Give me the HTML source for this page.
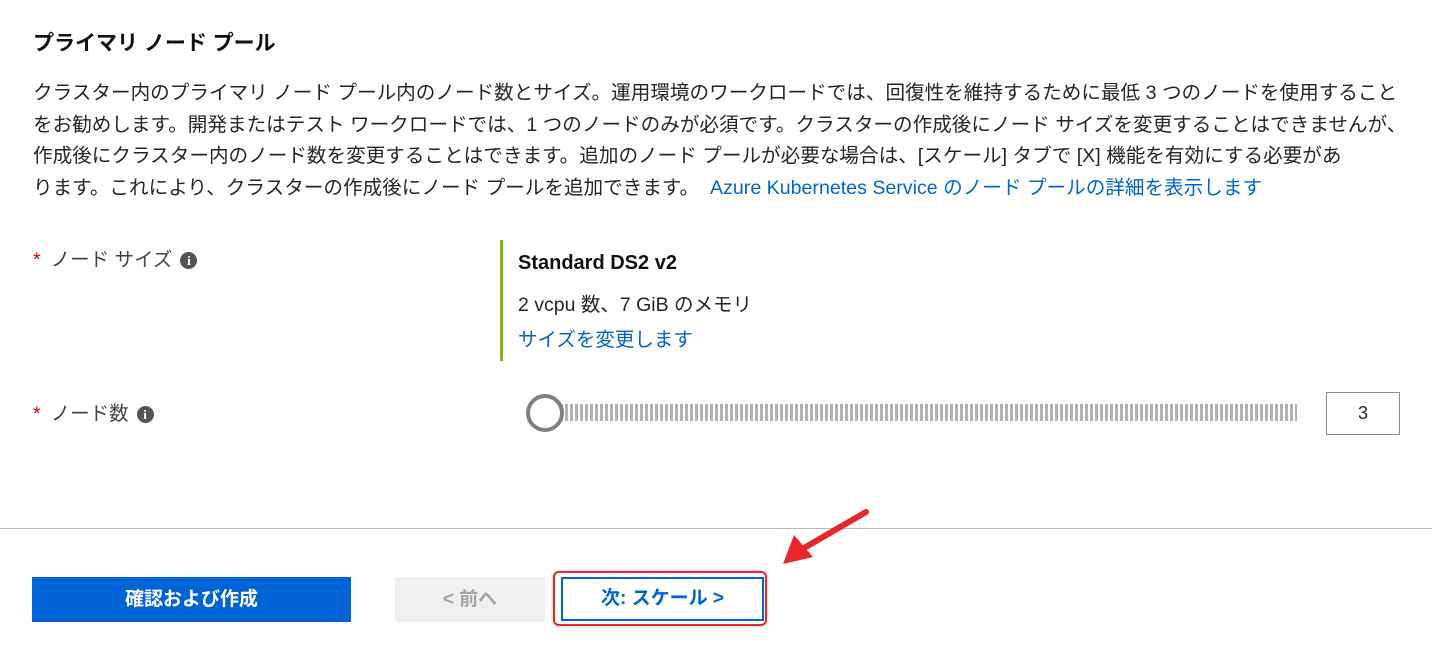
<!DOCTYPE html>
<html><head><meta charset="utf-8"><style>
body{margin:0;width:1432px;height:645px;background:#fff;position:relative;overflow:hidden;font-family:"Liberation Sans","Noto Sans CJK JP",sans-serif;color:#262626}
.a{position:absolute;white-space:nowrap}
.p{font-size:19.6px;line-height:31.5px}
a{color:#0066cc;text-decoration:none}
.info{display:inline-block;width:17px;height:17px;border-radius:50%;background:#555;color:#fff;font-size:13px;font-weight:bold;text-align:center;line-height:17px;font-family:"Liberation Serif",serif;vertical-align:middle;margin-left:8px}
.req{color:#e00;margin-right:10px}
</style></head><body>
<div class="a" style="left:33px;top:27px;font-size:21px;font-weight:bold;color:#111">プライマリ ノード プール</div>
<div class="a p" style="left:33px;top:78px">クラスター内のプライマリ ノード プール内のノード数とサイズ。運用環境のワークロードでは、回復性を維持するために最低 3 つのノードを使用すること<br>をお勧めします。開発またはテスト ワークロードでは、1 つのノードのみが必須です。クラスターの作成後にノード サイズを変更することはできませんが、<br>作成後にクラスター内のノード数を変更することはできます。追加のノード プールが必要な場合は、[スケール] タブで [X] 機能を有効にする必要があ<br>ります。これにより、クラスターの作成後にノード プールを追加できます。 &nbsp;<a>Azure Kubernetes Service のノード プールの詳細を表示します</a></div>
<div class="a" style="left:33px;top:243px;font-size:19.5px;color:#444"><span class="req">*</span>ノード サイズ<span class="info">i</span></div>
<div class="a" style="left:500px;top:240px;width:3px;height:121px;background:#7fba00"></div>
<div class="a" style="left:518px;top:252px;font-size:20px;font-weight:bold;color:#111">Standard DS2 v2</div>
<div class="a" style="left:518px;top:288px;font-size:19.5px">2 vcpu 数、7 GiB のメモリ</div>
<div class="a" style="left:518px;top:323px;font-size:19.5px"><a>サイズを変更します</a></div>
<div class="a" style="left:33px;top:397px;font-size:19.5px;color:#444"><span class="req">*</span>ノード数<span class="info">i</span></div>
<div class="a" style="left:560px;top:404px;width:737px;height:17px;background:repeating-linear-gradient(90deg,#b3b3b3 0 3px,transparent 3px 5px)"></div>
<div class="a" style="left:526px;top:394px;width:30px;height:30px;border:4px solid #808080;border-radius:50%;background:#fff"></div>
<div class="a" style="left:1326px;top:392px;width:72px;height:41px;border:1px solid #8a8a8a;text-align:center;line-height:41px;font-size:18px">3</div>
<div class="a" style="left:0;top:528px;width:1432px;height:1px;background:#bbb"></div>
<div class="a" style="left:32px;top:577px;width:319px;height:45px;background:#0063d6;color:#fff;font-weight:bold;font-size:19px;text-align:center;line-height:45px">確認および作成</div>
<div class="a" style="left:395px;top:577px;width:150px;height:45px;background:#f0f0f0;color:#a6a6a6;font-weight:bold;font-size:19px;text-align:center;line-height:45px">&lt; 前へ</div>
<div class="a" style="left:553px;top:571px;width:214px;height:55px;border:2px solid #e8262b;border-radius:6px;box-sizing:border-box;box-shadow:0 0 3px rgba(0,0,0,.25)"></div>
<div class="a" style="left:561px;top:577px;width:203px;height:44px;border:2px solid #0063d6;box-sizing:border-box;color:#0063d6;font-weight:bold;font-size:19px;text-align:center;line-height:40px">次: スケール &gt;</div>
<svg class="a" style="left:780px;top:508px" width="92" height="60"><path d="M86 4 L24 40" stroke="#e8262b" stroke-width="6" stroke-linecap="round"/><path d="M3 56 L14 27 L33 49 Z" fill="#e8262b"/></svg>
</body></html>
